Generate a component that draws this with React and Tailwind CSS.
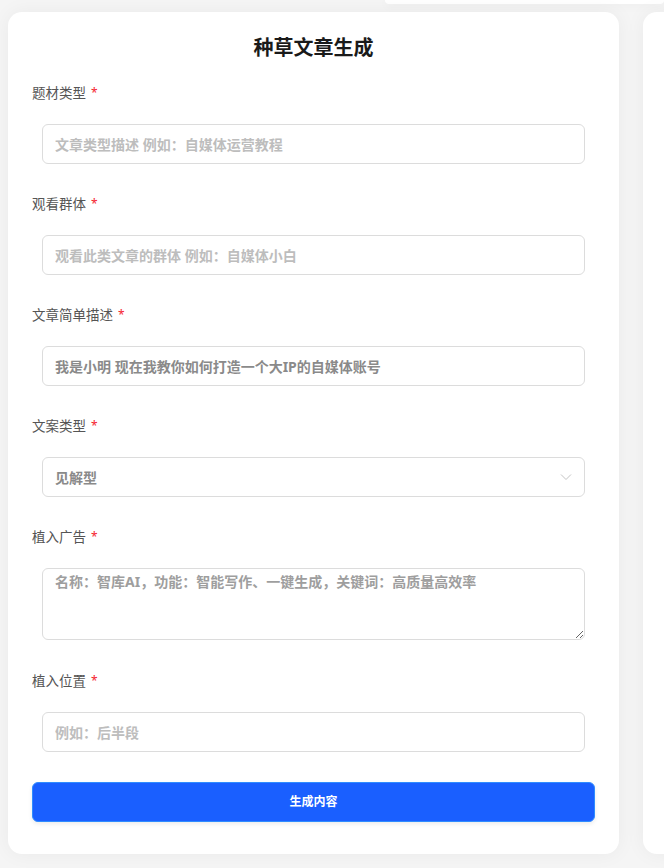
import React, { useState } from "react";

const fields = [
	{ label: "题材类型", placeholder: "文章类型描述 例如：自媒体运营教程" },
	{ label: "观看群体", placeholder: "观看此类文章的群体 例如：自媒体小白" },
	{ label: "文章简单描述", value: "我是小明 现在我教你如何打造一个大IP的自媒体账号" },
];

const Label = ({ text }) => (
	<div className="h-5 flex items-center text-[13.5px] text-[#555] leading-5">
		{text}
		<span className="ml-[5px] text-[#f5222d] text-[12px]">*</span>
	</div>
);

const App = () => {
	const [type, setType] = useState("见解型");

	return (
		<div
			className="w-[664px] h-[868px] overflow-hidden bg-[#f5f5f5] relative"
			style={{ fontFamily: '"Noto Sans", "Noto Sans CJK SC", sans-serif' }}
		>
			{/* edge of the card above */}
			<div className="h-[4px] ml-[385px] bg-white rounded-b-xl shadow-[0_2px_10px_rgba(0,0,0,0.05)]"></div>

			<div className="flex gap-6 pl-2 pt-2">
				<div className="w-[611px] h-[842px] shrink-0 bg-white rounded-[14px] shadow-[0_0_20px_rgba(0,0,0,0.05)] px-6 pt-[22px]">
					<h1 className="text-center text-[20px] font-bold text-[#1a1a1a] leading-7">种草文章生成</h1>

					<div className="mt-[21px] flex flex-col">
						{fields.map((f, i) => (
							<div key={i} className="flex flex-col mb-[30px]">
								<Label text={f.label} />
								<input
									className={`mt-[21px] mx-[10px] h-10 rounded-md border border-[#dcdcdc] px-3 text-[14px] font-bold outline-none placeholder:text-[#bdbdbd] ${
										f.value ? "text-[#8a8a8a]" : ""
									}`}
									placeholder={f.placeholder}
									defaultValue={f.value}
								/>
							</div>
						))}

						<div className="flex flex-col mb-[30px]">
							<Label text="文案类型" />
							<div className="mt-[21px] mx-[10px] h-10 rounded-md border border-[#dcdcdc] px-3 flex items-center justify-between">
								<span className="text-[14px] font-bold text-[#8a8a8a]">{type}</span>
								<svg width="12" height="8" viewBox="0 0 12 8" fill="none" onClick={() => setType(type)}>
									<path d="M1 1.5 L6 6.5 L11 1.5" stroke="#c4c4c4" strokeWidth="1" />
								</svg>
							</div>
						</div>

						<div className="flex flex-col mb-[31px]">
							<Label text="植入广告" />
							<textarea
								className="mt-[21px] mx-[10px] h-[72px] rounded-md border border-[#dcdcdc] px-3 py-[2px] text-[14px] font-bold outline-none placeholder:text-[#9e9e9e] resize-y"
								placeholder="名称：智库AI，功能：智能写作、一键生成，关键词：高质量高效率"
							></textarea>
						</div>

						<div className="flex flex-col mb-[30px]">
							<Label text="植入位置" />
							<input
								className="mt-[21px] mx-[10px] h-10 rounded-md border border-[#dcdcdc] px-3 text-[14px] font-bold outline-none placeholder:text-[#bdbdbd]"
								placeholder="例如：后半段"
							/>
						</div>

						<button className="h-10 rounded-md bg-[#1a5fff] border border-[#2f8cff] text-white text-[12px] font-bold shadow-[0_2px_4px_rgba(0,0,0,0.08)]">
							生成内容
						</button>
					</div>
				</div>

				<div className="w-[200px] h-[842px] shrink-0 bg-white rounded-[14px] shadow-[0_0_20px_rgba(0,0,0,0.05)]"></div>
			</div>
		</div>
	);
};

export default App;
